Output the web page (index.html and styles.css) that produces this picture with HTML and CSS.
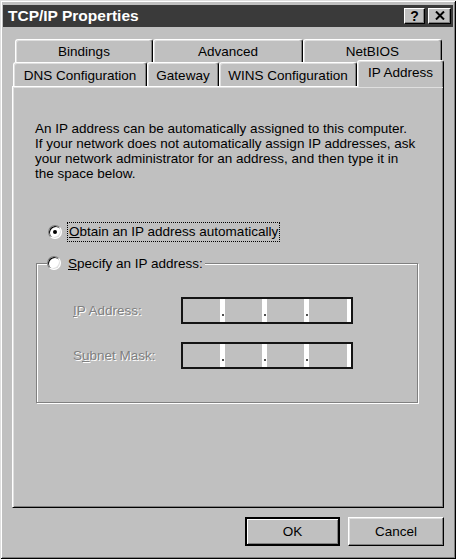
FILE: index.html
```html
<!DOCTYPE html>
<html>
<head>
<meta charset="utf-8">
<title>TCP/IP Properties</title>
<link rel="stylesheet" href="styles.css">
</head>
<body>
<div class="window">
  <div class="titlebar">
    <span class="title">TCP/IP Properties</span>
    <div class="tbtns">
      <span class="tbtn help">?</span>
      <span class="tbtn close"><svg width="10" height="9" viewBox="0 0 10 9"><path d="M1 0.5 L9 8.5 M9 0.5 L1 8.5" stroke="#000" stroke-width="2"/></svg></span>
    </div>
  </div>

  <div class="tabs">
    <div class="tabrow back">
      <div class="tab t-bind">Bindings</div>
      <div class="tab t-adv">Advanced</div>
      <div class="tab t-net">NetBIOS</div>
    </div>
    <div class="tabrow front">
      <div class="tab t-dns">DNS Configuration</div>
      <div class="tab t-gw">Gateway</div>
      <div class="tab t-wins">WINS Configuration</div>
      <div class="tab t-ip selected">IP Address</div>
    </div>
  </div>

  <div class="panel">
    <p class="intro">An IP address can be automatically assigned to this computer.<br>If your network does not automatically assign IP addresses, ask<br>your network administrator for an address, and then type it in<br>the space below.</p>

    <div class="radio-row first">
      <span class="radio checked"></span>
      <span class="rlabel focus"><u>O</u>btain an IP address automatically</span>
    </div>

    <div class="group">
      <div class="legend">
        <span class="radio"></span>
        <span class="rlabel"><u>S</u>pecify an IP address:</span>
      </div>
      <div class="fields">
        <span class="dlabel"><u>I</u>P Address:</span>
        <div class="ipfield">
          <span class="seg"></span><span class="dot"></span>
          <span class="seg"></span><span class="dot"></span>
          <span class="seg"></span><span class="dot"></span>
          <span class="seg last"></span><span class="endstrip"></span>
        </div>
        <span class="dlabel">S<u>u</u>bnet Mask:</span>
        <div class="ipfield">
          <span class="seg"></span><span class="dot"></span>
          <span class="seg"></span><span class="dot"></span>
          <span class="seg"></span><span class="dot"></span>
          <span class="seg last"></span><span class="endstrip"></span>
        </div>
      </div>
    </div>
  </div>

  <div class="buttons">
    <button class="btn default">OK</button>
    <button class="btn cancel">Cancel</button>
  </div>
</div>
</body>
</html>
```

FILE: styles.css
```css
html, body {
  margin: 0;
  padding: 0;
  background: #c0c0c0;
}

body {
  font-family: "Liberation Sans", Arial, sans-serif;
  font-size: 13.5px;
  color: #000;
}

.window {
  width: 456px;
  height: 559px;
  box-sizing: border-box;
  padding-top: 5px;
  background: #c0c0c0;
  box-shadow: inset 1px 1px 0 #dfdfdf, inset -1px -1px 0 #000,
              inset 2px 2px 0 #fff, inset -2px -2px 0 #808080;
  display: flex;
  flex-direction: column;
}

/* Title bar */
.titlebar {
  margin: 0 3px;
  height: 22px;
  background: #3a3a3a;
  display: flex;
  align-items: center;
  justify-content: space-between;
  padding: 0 2px 0 5px;
}

.title {
  color: #fff;
  font-weight: bold;
  font-size: 15.5px;
}

.tbtns {
  display: flex;
  gap: 3px;
  margin-top: -1px;
}

.tbtn {
  width: 21px;
  height: 16px;
  box-sizing: border-box;
  background: #c0c0c0;
  border: 1px solid;
  border-color: #fff #000 #000 #fff;
  box-shadow: inset -1px -1px 0 #808080;
  display: flex;
  align-items: center;
  justify-content: center;
  font-weight: bold;
  font-size: 14px;
  line-height: 1;
}

.tbtn.close {
  width: 23px;
}

/* Tabs */
.tabs {
  margin: 12px 12px 0 12px;
  display: flex;
  flex-direction: column;
  position: relative;
  z-index: 2;
}

.tabrow {
  display: flex;
  align-items: flex-end;
}

.tabrow.back {
  height: 23px;
  margin-left: 3px;
}

.tabrow.front {
  height: 24px;
  margin-left: 1px;
}

.tab {
  box-sizing: border-box;
  height: 100%;
  background: #c0c0c0;
  border: 1px solid;
  border-bottom: none;
  border-color: #fff #000 transparent #fff;
  border-radius: 3px 3px 0 0;
  box-shadow: inset -1px 0 0 #808080, inset 1px 1px 0 #dfdfdf;
  display: flex;
  align-items: center;
  justify-content: center;
  white-space: nowrap;
  padding-top: 1px;
}

.t-bind { width: 138px; }
.t-adv { width: 150px; }
.t-net { width: 139px; }
.t-dns { width: 134px; }
.t-gw { width: 72px; }
.t-wins { width: 138px; }

.tab.selected {
  width: 87px;
  height: 27px;
  margin-bottom: -1px;
  align-items: flex-start;
  padding-top: 4px;
}

/* Panel */
.panel {
  margin: 0 12px;
  height: 422px;
  box-sizing: border-box;
  border: 1px solid;
  border-color: #fff #000 #000 #fff;
  box-shadow: inset 1px 1px 0 #dfdfdf, inset -1px -1px 0 #808080;
  display: flex;
  flex-direction: column;
  align-items: flex-start;
}

.intro {
  margin: 34px 0 0 22px;
  line-height: 15px;
  white-space: nowrap;
}

.radio-row {
  display: flex;
  align-items: center;
  gap: 5px;
  height: 19px;
}

.radio-row.first {
  margin: 41px 0 0 35px;
}

.radio {
  position: relative;
  flex: none;
  width: 14px;
  height: 14px;
  box-sizing: border-box;
  border-radius: 50%;
  background: #fff;
  border: 1px solid;
  border-color: #808080 #fff #fff #808080;
  box-shadow: inset 1px 1px 0 #000, inset -1px -1px 0 #dfdfdf;
}

.radio.checked::after {
  content: "";
  position: absolute;
  left: 4px;
  top: 4px;
  width: 4px;
  height: 4px;
  border-radius: 50%;
  background: #000;
}

.rlabel {
  padding: 1px 1px 2px 1px;
  border: 1px dotted transparent;
  white-space: nowrap;
}

.rlabel.focus {
  border-color: #000;
}

/* Group box */
.group {
  margin: 22px 0 0 23px;
  width: 382px;
  height: 140px;
  box-sizing: border-box;
  border: 1px solid #808080;
  box-shadow: 1px 1px 0 #fff, inset 1px 1px 0 #fff;
  display: flex;
  flex-direction: column;
  align-items: flex-start;
}

.legend {
  margin: -10px 0 0 10px;
  height: 18px;
  display: flex;
  align-items: center;
  gap: 7px;
  background: #c0c0c0;
  padding-right: 2px;
}

.legend .rlabel {
  padding: 0;
  border: none;
}

.fields {
  margin: 25px 0 0 36px;
  display: grid;
  grid-template-columns: 108px 172px;
  grid-auto-rows: 27px;
  row-gap: 18px;
  align-items: center;
}

.dlabel {
  color: #808080;
  text-shadow: 1px 1px 0 #fff;
  white-space: nowrap;
}

.ipfield {
  height: 27px;
  box-sizing: border-box;
  border: 2px solid #141414;
  display: flex;
  background: #c0c0c0;
}

.seg {
  width: 37px;
}

.seg.last {
  width: 38px;
}

.dot {
  width: 5px;
  background: #fff;
  position: relative;
}

.dot::after {
  content: "";
  position: absolute;
  left: 2px;
  bottom: 6px;
  width: 2px;
  height: 2px;
  background: #505050;
}

.endstrip {
  width: 4px;
  background: #fff;
}

/* Buttons */
.buttons {
  margin: 9px 12px 0 0;
  display: flex;
  justify-content: flex-end;
  gap: 8px;
}

.btn {
  font-family: "Liberation Sans", Arial, sans-serif;
  font-size: 13.5px;
  color: #000;
  width: 96px;
  height: 29px;
  box-sizing: border-box;
  background: #c0c0c0;
  border: 1px solid;
  border-color: #fff #000 #000 #fff;
  box-shadow: inset -1px -1px 0 #808080, inset 1px 1px 0 #dfdfdf;
  padding: 0;
  margin: 0;
}

.btn.default {
  width: 95px;
  border: 2px solid #000;
  box-shadow: inset 1px 1px 0 #fff, inset -1px -1px 0 #808080;
}
```
